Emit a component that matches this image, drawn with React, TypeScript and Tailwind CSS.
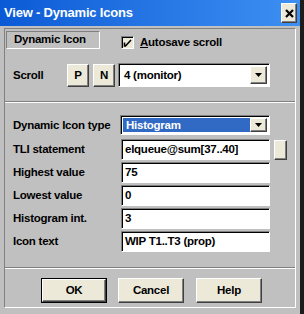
const raised =
  "bg-[#ece9d8] border border-t-white border-l-white border-r-[#404040] border-b-[#404040] shadow-[inset_-1px_-1px_0_#808080]";
const sunken =
  "border border-t-[#808080] border-l-[#808080] border-r-white border-b-white shadow-[inset_1px_1px_0_#000]";

function Arrow() {
  return (
    <div className={`${raised} flex h-full w-[17px] items-center justify-center`}>
      <svg width="7" height="4" viewBox="0 0 7 4">
        <path d="M0 0h7L3.5 4z" fill="#000" />
      </svg>
    </div>
  );
}

function Select({ value, selected }: { value: string; selected?: boolean }) {
  return (
    <div className={`${sunken} flex h-full w-full items-stretch bg-white p-[2px]`}>
      <div
        className={`flex flex-1 items-center pl-[3px] ${
          selected ? "bg-[#316ac5] text-white" : "text-black"
        }`}
      >
        {value}
      </div>
      <Arrow />
    </div>
  );
}

function Field({ label, value }: { label: string; value: string }) {
  return (
    <div className="flex h-[21px] items-center">
      <div className="w-[115px] pl-[8px]">{label}</div>
      <div className={`${sunken} ml-[1px] flex h-full w-[149px] items-center bg-white pl-[3px]`}>
        {value}
      </div>
    </div>
  );
}

function Button({ label, isDefault }: { label: string; isDefault?: boolean }) {
  return (
    <div className={`h-[25px] w-[66px] ${isDefault ? "border border-black" : ""}`}>
      <div className={`${raised} flex h-full w-full items-center justify-center`}>{label}</div>
    </div>
  );
}

export default function App() {
  return (
    <div className="flex h-[314px] w-[304px] bg-[#1c1c1c]">
      <div className="flex h-[314px] w-[300px] flex-col bg-[#c0c0c0] font-['Liberation_Sans',Arial,sans-serif] text-[11.5px] font-bold tracking-[-0.25px] text-black">
        {/* title bar */}
        <div className="flex h-[26px] items-center justify-between bg-gradient-to-r from-[#0a5ad6] to-[#3d8ff2] pl-[4px] pr-[3px]">
          <span className="text-[13px] tracking-[-0.2px] text-white">View - Dynamic Icons</span>
          <div className={`${raised} flex h-[20px] w-[16px] items-center justify-center`}>
            <svg width="9" height="9" viewBox="0 0 9 9">
              <path d="M1 1l7 7M8 1L1 8" stroke="#000" strokeWidth="2.2" />
            </svg>
          </div>
        </div>

        <div className="mx-[4px] mb-[6px] mt-[2px] flex flex-1 flex-col border border-t-[#808080] border-l-[#808080] border-r-white border-b-white">
          {/* header row */}
          <div className="mt-[2px] flex items-start">
            <div className="ml-[1px] flex h-[18px] w-[94px] items-center border border-t-[#808080] border-l-[#808080] border-r-white border-b-white pl-[7px]">
              Dynamic Icon
            </div>
            <div className="ml-[21px] mt-[3px] flex items-center">
              <div className={`${sunken} flex h-[13px] w-[13px] items-center justify-center bg-[#ece9d8]`}>
                <svg width="9" height="9" viewBox="0 0 9 9">
                  <path d="M1.5 4.5v3.5h1L8 2" stroke="#000" strokeWidth="1.6" fill="none" />
                </svg>
              </div>
              <span className="ml-[6px]">
                <span className="underline">A</span>utosave scroll
              </span>
            </div>
          </div>

          {/* scroll row */}
          <div className="mt-[12px] flex h-[24px] items-center">
            <div className="w-[62px] pl-[8px]">Scroll</div>
            <div className={`${raised} flex h-[23px] w-[22px] items-center justify-center`}>P</div>
            <div className={`${raised} ml-[4px] flex h-[23px] w-[22px] items-center justify-center`}>N</div>
            <div className="ml-[3px] h-[24px] w-[152px]">
              <Select value="4 (monitor)" />
            </div>
          </div>

          <div className="mt-[14px] border-t border-b border-t-[#808080] border-b-white" />

          {/* fields */}
          <div className="mt-[12px] flex h-[20px] items-center">
            <div className="w-[115px] pl-[8px]">Dynamic Icon type</div>
            <div className="h-[20px] w-[150px]">
              <Select value="Histogram" selected />
            </div>
          </div>
          <div className="mt-[4px] flex flex-col gap-[2px]">
            <div className="flex items-center">
              <Field label="TLI statement" value="elqueue@sum[37..40]" />
              <div className={`${raised} ml-[4px] h-[20px] w-[13px]`} />
            </div>
            <Field label="Highest value" value="75" />
            <Field label="Lowest value" value="0" />
            <Field label="Histogram int." value="3" />
            <Field label="Icon text" value="WIP T1..T3 (prop)" />
          </div>

          <div className="mt-[15px] border-t border-b border-t-[#808080] border-b-white" />

          {/* buttons */}
          <div className="mt-[9px] flex pl-[36px]">
            <Button label="OK" isDefault />
            <div className="ml-[11px]">
              <Button label="Cancel" />
            </div>
            <div className="ml-[12px]">
              <Button label="Help" />
            </div>
          </div>
        </div>
      </div>
    </div>
  );
}
